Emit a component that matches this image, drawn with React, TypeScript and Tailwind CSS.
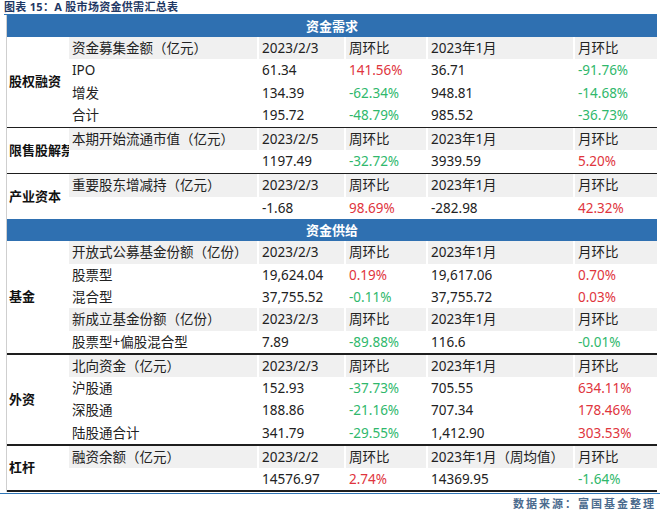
import React from 'react';

type Tone = 'r' | 'g' | undefined;

interface Cell {
  text: string;
  tone?: Tone;
}

interface Row {
  head?: boolean;
  cells: Cell[];
}

interface Section {
  label: string;
  rows: Row[];
  divider?: boolean;
}

const head = (title: string, date: string, month = '2023年1月'): Row => ({
  head: true,
  cells: [{ text: title }, { text: date }, { text: '周环比' }, { text: month }, { text: '月环比' }],
});

const row = (name: string, v1: string, w: string, wt: Tone, v2: string, m: string, mt: Tone): Row => ({
  cells: [{ text: name }, { text: v1 }, { text: w, tone: wt }, { text: v2 }, { text: m, tone: mt }],
});

const demand: Section[] = [
  {
    label: '股权融资',
    divider: true,
    rows: [
      head('资金募集金额（亿元）', '2023/2/3'),
      row('IPO', '61.34', '141.56%', 'r', '36.71', '-91.76%', 'g'),
      row('增发', '134.39', '-62.34%', 'g', '948.81', '-14.68%', 'g'),
      row('合计', '195.72', '-48.79%', 'g', '985.52', '-36.73%', 'g'),
    ],
  },
  {
    label: '限售股解禁',
    divider: true,
    rows: [
      head('本期开始流通市值（亿元）', '2023/2/5'),
      row('', '1197.49', '-32.72%', 'g', '3939.59', '5.20%', 'r'),
    ],
  },
  {
    label: '产业资本',
    rows: [
      head('重要股东增减持（亿元）', '2023/2/3'),
      row('', '-1.68', '98.69%', 'r', '-282.98', '42.32%', 'r'),
    ],
  },
];

const supply: Section[] = [
  {
    label: '基金',
    divider: true,
    rows: [
      head('开放式公募基金份额（亿份）', '2023/2/3'),
      row('股票型', '19,624.04', '0.19%', 'r', '19,617.06', '0.70%', 'r'),
      row('混合型', '37,755.52', '-0.11%', 'g', '37,755.72', '0.03%', 'r'),
      head('新成立基金份额（亿份）', '2023/2/3'),
      row('股票型+偏股混合型', '7.89', '-89.88%', 'g', '116.6', '-0.01%', 'g'),
    ],
  },
  {
    label: '外资',
    divider: true,
    rows: [
      head('北向资金（亿元）', '2023/2/3'),
      row('沪股通', '152.93', '-37.73%', 'g', '705.55', '634.11%', 'r'),
      row('深股通', '188.86', '-21.16%', 'g', '707.34', '178.46%', 'r'),
      row('陆股通合计', '341.79', '-29.55%', 'g', '1,412.90', '303.53%', 'r'),
    ],
  },
  {
    label: '杠杆',
    divider: true,
    rows: [
      head('融资余额（亿元）', '2023/2/2', '2023年1月（周均值）'),
      row('', '14576.97', '2.74%', 'r', '14369.95', '-1.64%', 'g'),
    ],
  },
];

function toneClass(tone: Tone) {
  if (tone === 'r') return 'text-[#e0353d]';
  if (tone === 'g') return 'text-[#30b86c]';
  return 'text-[#222]';
}

function TableRow({ data }: { data: Row }) {
  return (
    <div className="grid grid-cols-[190px_87px_82px_147px_82px] h-[22.4px]">
      {data.cells.map((c, i) => (
        <div key={i} className={i < 4 ? 'pr-[2px]' : ''}>
          <div
            className={`h-full pl-[3px] leading-[22.4px] whitespace-nowrap ${
              data.head ? 'bg-[#f0f0f0]' : ''
            } ${toneClass(c.tone)}`}
          >
            {c.text}
          </div>
        </div>
      ))}
    </div>
  );
}

function SectionBlock({ section }: { section: Section }) {
  return (
    <>
      <div className="flex">
        <div className="w-[62px] flex items-center overflow-hidden whitespace-nowrap pl-[2px] text-[13px] font-bold text-[#111]">
          {section.label}
        </div>
        <div className="flex-1 flex flex-col">
          {section.rows.map((r, i) => (
            <TableRow key={i} data={r} />
          ))}
        </div>
      </div>
      {section.divider && <div className="h-[1.5px] bg-[#1e1e1e]" />}
    </>
  );
}

function Band({ title }: { title: string }) {
  return (
    <div className="h-[22px] bg-[#2f70b1] text-white font-bold text-[13px] leading-[22px] text-center">
      {title}
    </div>
  );
}

export default function App() {
  return (
    <div className="w-[662px] h-[512px] bg-white overflow-hidden font-['Noto_Sans','Noto_Sans_CJK_SC',sans-serif] text-[13.5px] text-[#222]">
      <div className="h-[14px] pl-[4px] text-[11px] leading-[13px] font-bold tracking-[0.3px] text-[#1f3864]">
        图表 15：A 股市场资金供需汇总表
      </div>
      <div className="ml-[4px] w-[653px] h-[1px] bg-[#2e75b6]" />
      <div className="ml-[6px] w-[651px] border-l border-[#cfcfcf]">
        <Band title="资金需求" />
        {demand.map((s) => (
          <SectionBlock key={s.label} section={s} />
        ))}
        <Band title="资金供给" />
        {supply.map((s) => (
          <SectionBlock key={s.label} section={s} />
        ))}
      </div>
      <div className="mt-[1px] w-[660px] h-[1.5px] bg-[#2e75b6]" />
      <div className="pr-[6px] pt-[3px] text-right text-[11px] leading-[14px] font-bold tracking-[2px] text-[#4b6b8e]">
        数据来源：富国基金整理
      </div>
    </div>
  );
}
